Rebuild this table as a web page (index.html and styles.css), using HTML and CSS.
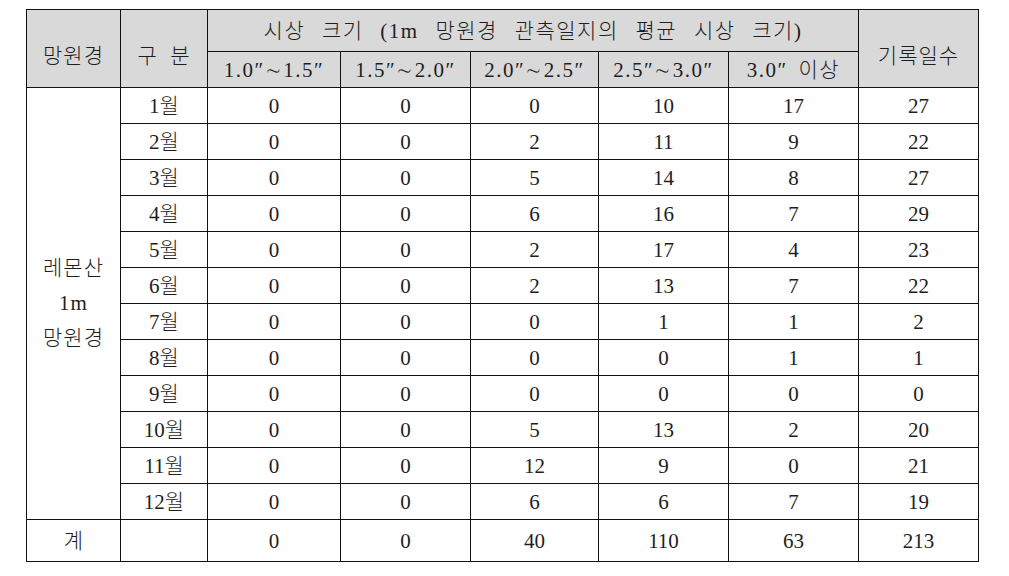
FILE: index.html
```html
<!DOCTYPE html>
<html lang="ko">
<head>
<meta charset="utf-8">
<link rel="stylesheet" href="styles.css">
</head>
<body>
<table class="seeing">
  <colgroup>
    <col class="c-scope">
    <col class="c-month">
    <col class="c-val">
    <col class="c-val2">
    <col class="c-val3">
    <col class="c-val2">
    <col class="c-val2">
    <col class="c-days">
  </colgroup>
  <thead>
    <tr class="h1">
      <th rowspan="2" class="rs">망원경</th>
      <th rowspan="2" class="rs">구&nbsp;&nbsp;분</th>
      <th colspan="5" class="span-title">시상 크기 (1m 망원경 관측일지의 평균 시상 크기)</th>
      <th rowspan="2" class="rs">기록일수</th>
    </tr>
    <tr class="h2">
      <th>1.0″∼1.5″</th>
      <th>1.5″∼2.0″</th>
      <th>2.0″∼2.5″</th>
      <th>2.5″∼3.0″</th>
      <th>3.0″ 이상</th>
    </tr>
  </thead>
  <tbody>
    <tr><td rowspan="12" class="scope">레몬산<br>1m<br>망원경</td><td>1월</td><td>0</td><td>0</td><td>0</td><td>10</td><td>17</td><td>27</td></tr>
    <tr><td>2월</td><td>0</td><td>0</td><td>2</td><td>11</td><td>9</td><td>22</td></tr>
    <tr><td>3월</td><td>0</td><td>0</td><td>5</td><td>14</td><td>8</td><td>27</td></tr>
    <tr><td>4월</td><td>0</td><td>0</td><td>6</td><td>16</td><td>7</td><td>29</td></tr>
    <tr><td>5월</td><td>0</td><td>0</td><td>2</td><td>17</td><td>4</td><td>23</td></tr>
    <tr><td>6월</td><td>0</td><td>0</td><td>2</td><td>13</td><td>7</td><td>22</td></tr>
    <tr><td>7월</td><td>0</td><td>0</td><td>0</td><td>1</td><td>1</td><td>2</td></tr>
    <tr><td>8월</td><td>0</td><td>0</td><td>0</td><td>0</td><td>1</td><td>1</td></tr>
    <tr><td>9월</td><td>0</td><td>0</td><td>0</td><td>0</td><td>0</td><td>0</td></tr>
    <tr><td>10월</td><td>0</td><td>0</td><td>5</td><td>13</td><td>2</td><td>20</td></tr>
    <tr><td>11월</td><td>0</td><td>0</td><td>12</td><td>9</td><td>0</td><td>21</td></tr>
    <tr><td>12월</td><td>0</td><td>0</td><td>6</td><td>6</td><td>7</td><td>19</td></tr>
    <tr class="total"><td>계</td><td></td><td>0</td><td>0</td><td>40</td><td>110</td><td>63</td><td>213</td></tr>
  </tbody>
</table>
</body>
</html>
```
FILE: styles.css
```css
html, body {
  margin: 0;
  padding: 0;
  background: #ffffff;
}

body {
  padding: 9px 0 0 26px;
  font-family: "Liberation Serif", "Noto Sans CJK KR", serif;
  font-weight: 300;
  color: #1e1e1e;
}

.seeing {
  border-collapse: collapse;
  table-layout: fixed;
  width: 952px;
  font-size: 21px;
}

.c-scope { width: 94px; }
.c-month { width: 87px; }
.c-val { width: 133px; }
.c-val2 { width: 130px; }
.c-val3 { width: 128px; }
.c-days { width: 120px; }

.seeing th,
.seeing td {
  border: 1px solid #111;
  padding: 0;
  text-align: center;
  vertical-align: middle;
  font-weight: 300;
  line-height: 24px;
  white-space: nowrap;
}

.seeing th {
  background: #d9d9d9;
}

.h1 th { height: 41px; }
.h2 th { height: 35px; }

.h2 th {
  letter-spacing: 1.5px;
  word-spacing: 4px;
}

.seeing th.rs {
  vertical-align: top;
  padding-top: 34px;
  letter-spacing: 1px;
}

.span-title {
  letter-spacing: 1.5px;
  word-spacing: 10px;
}

.seeing tbody td {
  height: 35px;
}

.seeing tbody .total td {
  height: 41px;
}

.seeing td.scope {
  line-height: 35px;
  letter-spacing: 1px;
}
```
